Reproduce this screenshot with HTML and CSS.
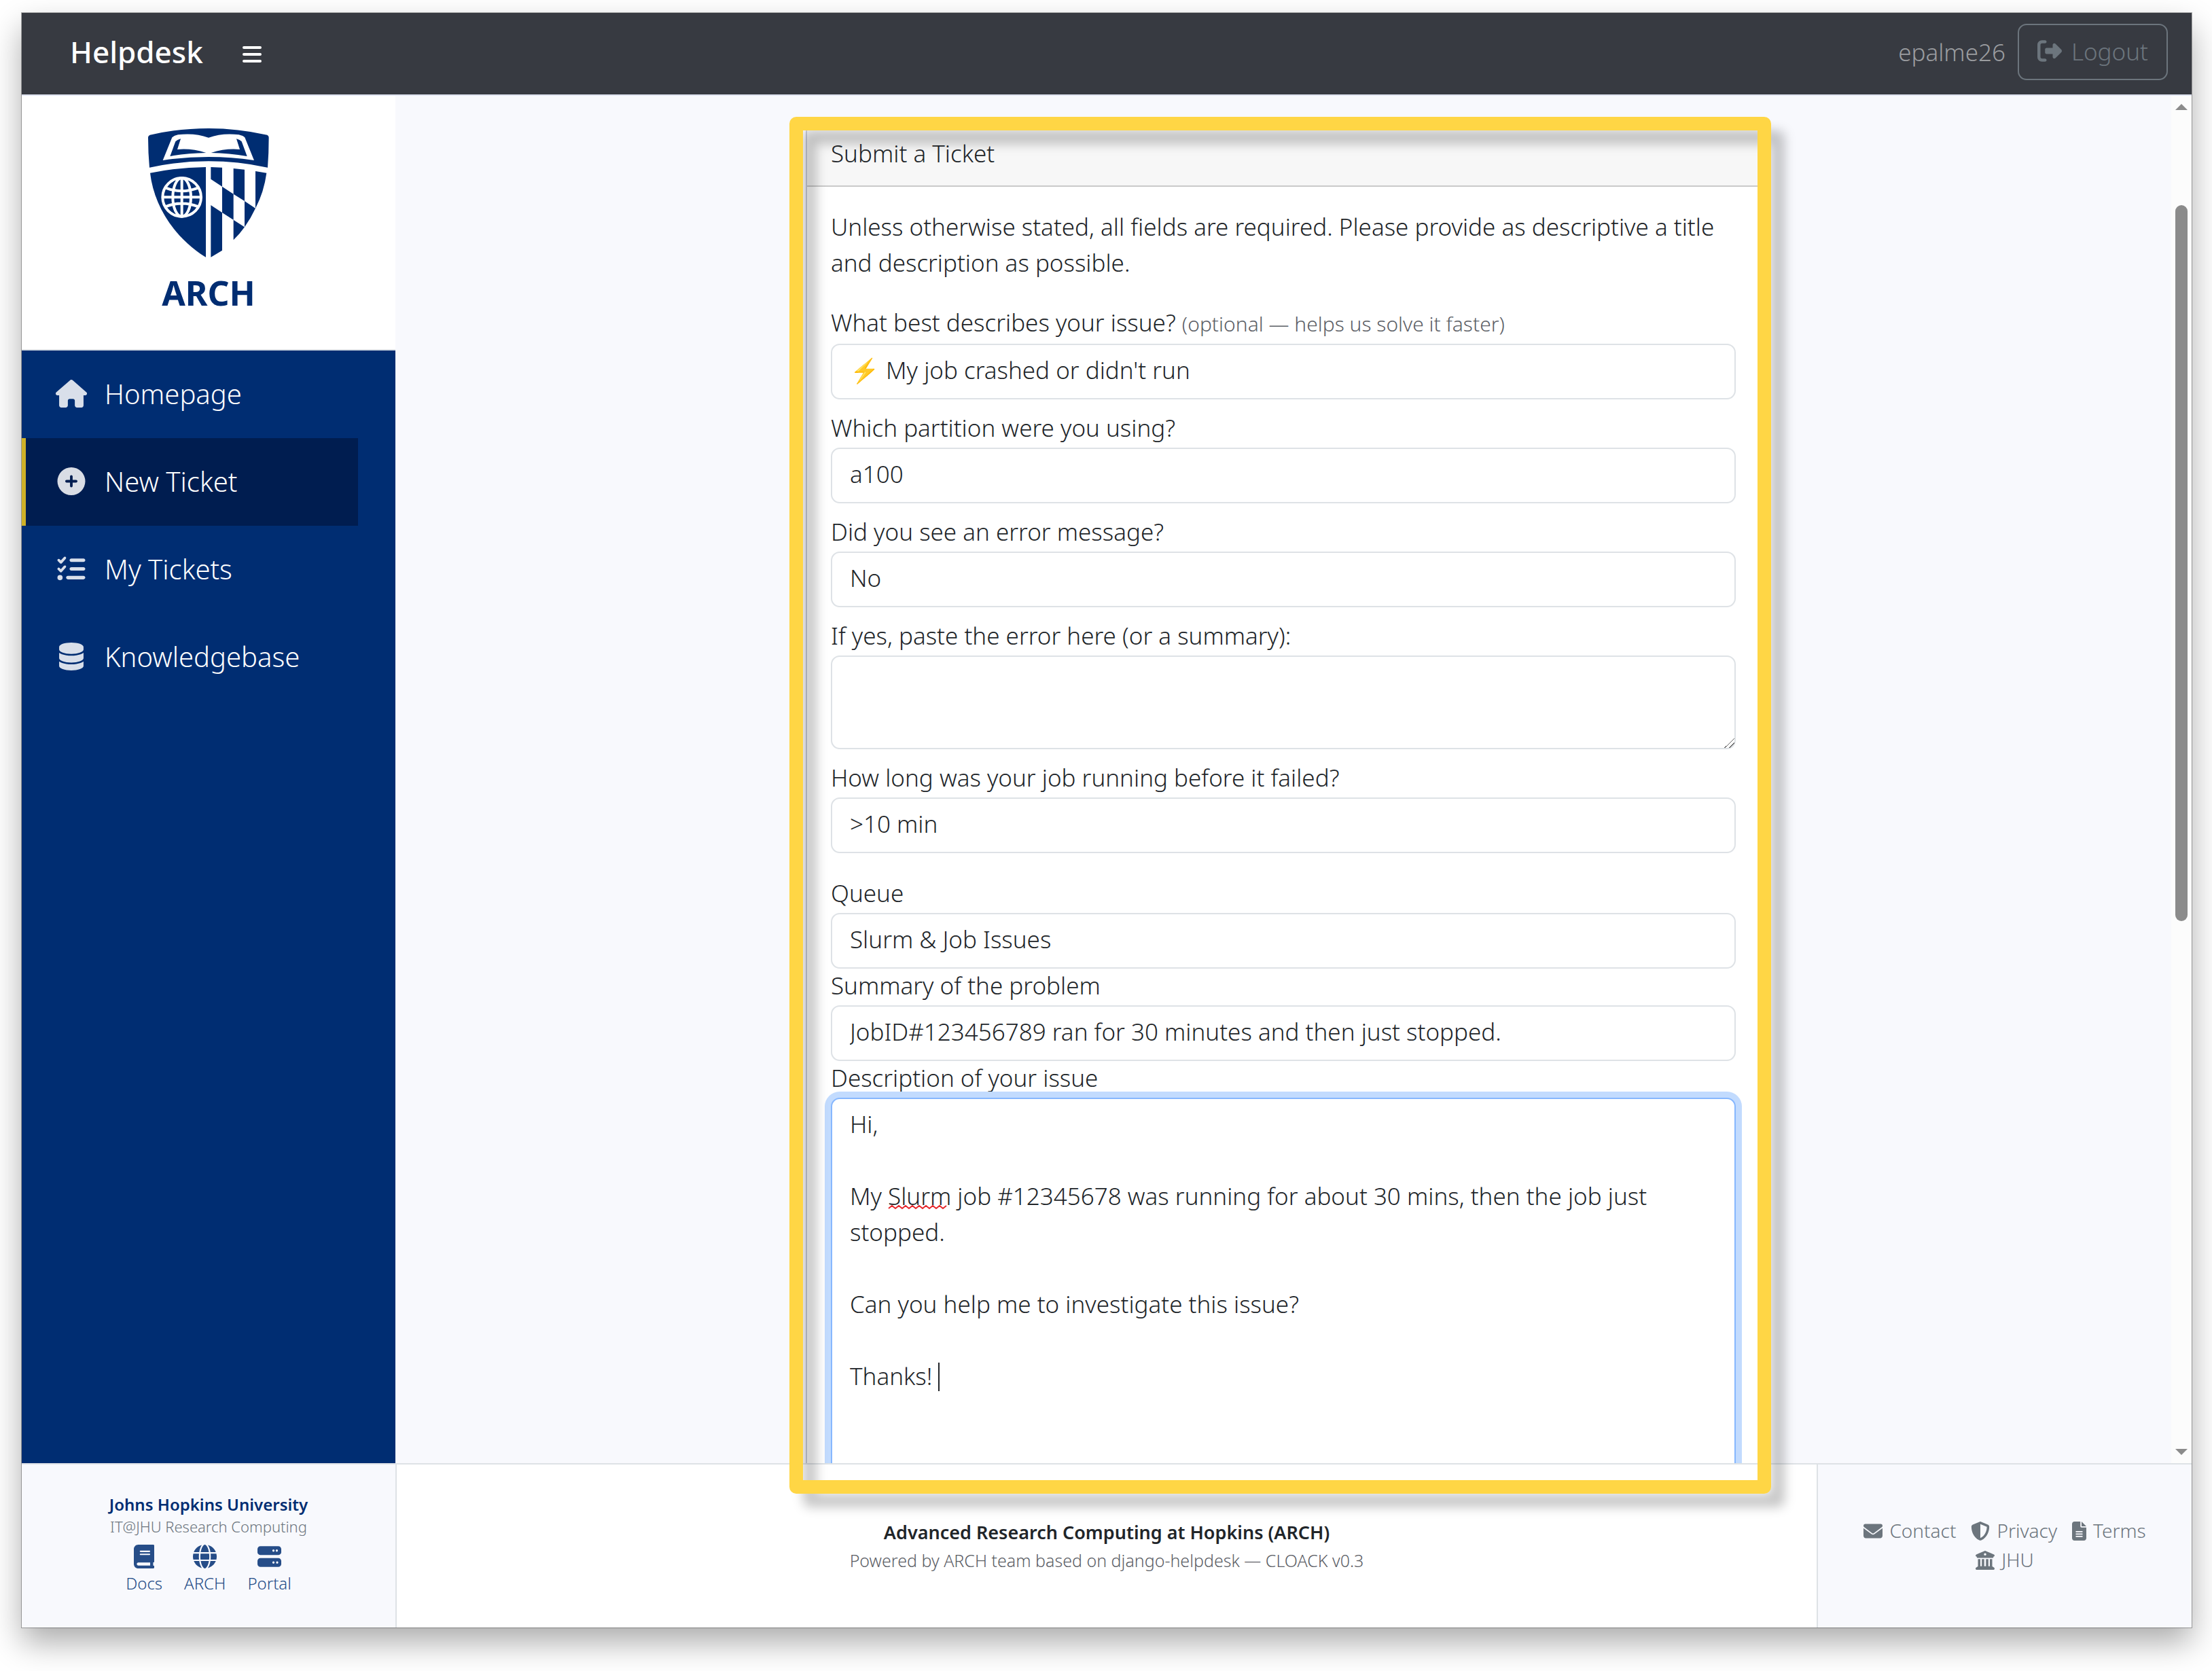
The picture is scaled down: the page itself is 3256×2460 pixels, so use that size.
FILE: index.html
```html
<!DOCTYPE html>
<html lang="en">
<head>
    <meta charset="UTF-8">
    <meta name="viewport" content="width=device-width, initial-scale=1.0">
    <title>Helpdesk - Submit a Ticket</title>
    <link rel="stylesheet" href="styles.css">
</head>
<body>

<div class="window">
    <header class="topbar">
        <a href="#" class="brand">Helpdesk</a>
        <button type="button" class="menu-toggle" aria-label="Toggle menu">
            <svg viewBox="0 0 28 24"><path d="M2 2h24M2 12h24M2 22h24" stroke="currentColor" stroke-width="4" stroke-linecap="round"/></svg>
        </button>
        <span class="user">epalme26</span>
        <button type="button" class="logout">
            <svg viewBox="0 0 512 512"><path d="M377.9 105.9L500.7 228.7c7.2 7.2 11.3 17.1 11.3 27.3s-4.1 20.1-11.3 27.3L377.9 406.1c-6.4 6.4-15 9.9-24 9.9c-18.7 0-33.9-15.2-33.9-33.9l0-62.1-128 0c-17.7 0-32-14.3-32-32l0-64c0-17.7 14.3-32 32-32l128 0 0-62.1c0-18.7 15.2-33.9 33.9-33.9c9 0 17.6 3.6 24 9.9zM160 96L96 96c-17.7 0-32 14.3-32 32l0 256c0 17.7 14.3 32 32 32l64 0c17.7 0 32 14.3 32 32s-14.3 32-32 32l-64 0c-53 0-96-43-96-96L0 128C0 75 43 32 96 32l64 0c17.7 0 32 14.3 32 32s-14.3 32-32 32z"/></svg>
            Logout
        </button>
    </header>

    <div class="middle">
        <aside class="sidebar">
            <a href="#" class="logo">
                <svg class="shield" viewBox="84 57 534 570">
                    <path d="M84 97Q84 89 92 86Q220 57 351 57Q480 57 610 86Q617 89 617 97Q617 165 612 230Q480 202 351 202Q220 202 90 230Q84 165 84 97z"/>
                    <!-- book -->
                    <path class="light" d="M149 198L190 97Q196 90 216 85Q290 76 351 98Q412 76 485 85Q505 90 511 97L552 198Q351 168 149 198z"/>
                    <path d="M228 103L213 150Q275 144 340 165Q260 166 181 180L205 115Q212 108 228 103z"/>
                    <path d="M474 103L489 150Q427 144 362 165Q442 166 521 180L497 115Q490 108 474 103z"/>
                    <!-- globe half -->
                    <path d="M93 254Q215 229 339 228V626C200 540 110 400 93 254z"/>
                    <g class="globe-lines">
                        <circle cx="233" cy="361" r="85"/>
                        <ellipse cx="233" cy="361" rx="40" ry="85"/>
                        <path d="M233 276V446M148 361H318M160 319Q233 348 306 319M160 403Q233 374 306 403"/>
                    </g>
                    <!-- banner half -->
                    <path d="M361 228L411 230V314L361 281zM361 396L411 429V596L361 626zM411 314L461 347V461L411 429zM461 234L510 239V378L461 347zM461 461L510 493Q490 522 461 550zM510 378L558 410Q538 453 510 493zM558 246L607 254Q596 337 558 410z"/>
                </svg>
                <span>ARCH</span>
            </a>
            <nav class="nav">
                <a href="#">
                    <svg viewBox="0 0 576 512"><path d="M575.8 255.5c0 18-15 32.1-32 32.1l-32 0 .7 160.2c0 2.7-.2 5.4-.5 8.1l0 16.2c0 22.1-17.9 40-40 40l-16 0c-1.1 0-2.2 0-3.3-.1c-1.4 .1-2.8 .1-4.2 .1L416 512l-24 0c-22.1 0-40-17.9-40-40l0-24 0-64c0-17.7-14.3-32-32-32l-64 0c-17.7 0-32 14.3-32 32l0 64 0 24c0 22.1-17.9 40-40 40l-24 0-31.9 0c-1.5 0-3-.1-4.5-.2c-1.2 .1-2.4 .2-3.6 .2l-16 0c-22.1 0-40-17.9-40-40l0-112c0-.9 0-1.9 .1-2.8l0-69.7-32 0c-18 0-32-14-32-32.1c0-9 3-17 10-24L266.4 8c7-7 15-8 22-8s15 2 21 7L564.8 231.5c8 7 12 15 11 24z"/></svg>
                    Homepage
                </a>
                <a href="#" class="active">
                    <svg viewBox="0 0 512 512"><path d="M256 512A256 256 0 1 0 256 0a256 256 0 1 0 0 512zM232 344l0-64-64 0c-13.3 0-24-10.7-24-24s10.7-24 24-24l64 0 0-64c0-13.3 10.7-24 24-24s24 10.7 24 24l0 64 64 0c13.3 0 24 10.7 24 24s-10.7 24-24 24l-64 0 0 64c0 13.3-10.7 24-24 24s-24-10.7-24-24z"/></svg>
                    New Ticket
                </a>
                <a href="#">
                    <svg viewBox="0 0 512 512"><path d="M152.1 38.2c9.9 8.9 10.7 24 1.8 33.9l-72 80c-4.4 4.9-10.6 7.8-17.2 7.9s-12.9-2.4-17.6-7L7 113C-2.3 103.6-2.3 88.4 7 79s24.6-9.4 33.9 0l22.1 22.1 55.1-61.2c8.9-9.9 24-10.7 33.9-1.8zm0 160c9.9 8.9 10.7 24 1.8 33.9l-72 80c-4.4 4.9-10.6 7.8-17.2 7.9s-12.9-2.4-17.6-7L7 273c-9.4-9.4-9.4-24.6 0-33.9s24.6-9.4 33.9 0l22.1 22.1 55.1-61.2c8.9-9.9 24-10.7 33.9-1.8zM224 96c0-17.7 14.3-32 32-32l224 0c17.7 0 32 14.3 32 32s-14.3 32-32 32l-224 0c-17.7 0-32-14.3-32-32zm0 160c0-17.7 14.3-32 32-32l224 0c17.7 0 32 14.3 32 32s-14.3 32-32 32l-224 0c-17.7 0-32-14.3-32-32zM160 416c0-17.7 14.3-32 32-32l288 0c17.7 0 32 14.3 32 32s-14.3 32-32 32l-288 0c-17.7 0-32-14.3-32-32zM48 368a48 48 0 1 1 0 96 48 48 0 1 1 0-96z"/></svg>
                    My Tickets
                </a>
                <a href="#">
                    <svg viewBox="0 0 448 512"><path d="M448 80l0 48c0 44.2-100.3 80-224 80S0 172.2 0 128L0 80C0 35.8 100.3 0 224 0S448 35.8 448 80zM393.2 214.7c20.8-7.4 39.9-16.9 54.8-28.6L448 288c0 44.2-100.3 80-224 80S0 332.2 0 288L0 186.1c14.9 11.8 34 21.2 54.8 28.6C99.7 230.7 159.5 240 224 240s124.3-9.3 169.2-25.3zM0 346.1c14.9 11.8 34 21.2 54.8 28.6C99.7 390.7 159.5 400 224 400s124.3-9.3 169.2-25.3c20.8-7.4 39.9-16.9 54.8-28.6l0 85.9c0 44.2-100.3 80-224 80S0 476.2 0 432l0-85.9z"/></svg>
                    Knowledgebase
                </a>
            </nav>
        </aside>

        <div class="content">
            <main class="scroll-area">
                <form class="card">
                    <div class="card-header">Submit a Ticket</div>
                    <div class="card-body">
                        <p class="intro">Unless otherwise stated, all fields are required. Please provide as descriptive a title and description as possible.</p>

                        <div class="triage">
                            <div class="field">
                                <label for="issueType">What best describes your issue? <small>(optional — helps us solve it faster)</small></label>
                                <select id="issueType"><option>⚡ My job crashed or didn't run</option></select>
                            </div>
                            <div class="field">
                                <label for="partition">Which partition were you using?</label>
                                <input type="text" id="partition" value="a100">
                            </div>
                            <div class="field">
                                <label for="sawError">Did you see an error message?</label>
                                <select id="sawError"><option>No</option></select>
                            </div>
                            <div class="field">
                                <label for="errorText">If yes, paste the error here (or a summary):</label>
                                <textarea id="errorText" rows="2"></textarea>
                            </div>
                            <div class="field">
                                <label for="runtime">How long was your job running before it failed?</label>
                                <select id="runtime"><option>&gt;10 min</option></select>
                            </div>
                        </div>

                        <label for="queue">Queue</label>
                        <select id="queue"><option>Slurm &amp; Job Issues</option></select>

                        <label for="summary">Summary of the problem</label>
                        <input type="text" id="summary" value="JobID#123456789 ran for 30 minutes and then just stopped.">

                        <label for="description">Description of your issue</label>
                        <div class="editor">
                            <textarea id="description" rows="12" spellcheck="false">Hi,

My Slurm job #12345678 was running for about 30 mins, then the job just stopped.

Can you help me to investigate this issue?

Thanks!</textarea>
                            <svg class="misspelled" viewBox="0 0 90 8" aria-hidden="true"><path d="M1 6l5-4 5 4 5-4 5 4 5-4 5 4 5-4 5 4 5-4 5 4 5-4 5 4 5-4 5 4 5-4 5 4 5-4"/></svg>
                            <span class="caret"></span>
                        </div>
                    </div>
                </form>
            </main>
            <div class="highlight"></div>
        </div>

        <div class="scrollbar">
            <span class="arrow-up"></span>
            <span class="thumb"></span>
            <span class="arrow-down"></span>
        </div>
    </div>

    <footer class="footer">
        <div class="footer-left">
            <strong>Johns Hopkins University</strong>
            <span class="unit">IT@JHU Research Computing</span>
            <div class="quick-links">
                <a href="#">
                    <svg viewBox="0 0 448 512"><path d="M96 0C43 0 0 43 0 96L0 416c0 53 43 96 96 96l288 0 32 0c17.7 0 32-14.3 32-32s-14.3-32-32-32l0-64c17.7 0 32-14.3 32-32l0-320c0-17.7-14.3-32-32-32L384 0 96 0zm0 384l256 0 0 64L96 448c-17.7 0-32-14.3-32-32s14.3-32 32-32zm32-240c0-8.8 7.2-16 16-16l192 0c8.8 0 16 7.2 16 16s-7.2 16-16 16l-192 0c-8.8 0-16-7.2-16-16zm16 48l192 0c8.8 0 16 7.2 16 16s-7.2 16-16 16l-192 0c-8.8 0-16-7.2-16-16s7.2-16 16-16z"/></svg>
                    Docs
                </a>
                <a href="#">
                    <svg viewBox="0 0 512 512"><path d="M352 256c0 22.2-1.2 43.6-3.3 64l-185.3 0c-2.2-20.4-3.3-41.8-3.3-64s1.2-43.6 3.3-64l185.3 0c2.2 20.4 3.3 41.8 3.3 64zm28.8-64l123.1 0c5.3 20.5 8.1 41.9 8.1 64s-2.8 43.5-8.1 64l-123.1 0c2.1-20.6 3.2-42 3.2-64s-1.1-43.4-3.2-64zm112.6-32l-116.7 0c-10-63.9-29.8-117.4-55.3-151.6c78.3 20.7 142 77.5 171.9 151.6zm-149.1 0l-176.6 0c6.1-36.4 15.5-68.6 27-94.7c10.5-23.6 22.2-40.7 33.5-51.5C239.4 3.2 248.7 0 256 0s16.6 3.2 27.8 13.8c11.3 10.8 23 27.9 33.5 51.5c11.6 26 20.9 58.2 27 94.7zm-209 0L18.6 160C48.6 85.9 112.2 29.1 190.6 8.4C165.1 42.6 145.3 96.1 135.3 160zM8.1 192l123.1 0c-2.1 20.6-3.2 42-3.2 64s1.1 43.4 3.2 64L8.1 320C2.8 299.5 0 278.1 0 256s2.8-43.5 8.1-64zM194.7 446.6c-11.6-26-20.9-58.2-27-94.6l176.6 0c-6.1 36.4-15.5 68.6-27 94.6c-10.5 23.6-22.2 40.7-33.5 51.5C272.6 508.8 263.3 512 256 512s-16.6-3.2-27.8-13.8c-11.3-10.8-23-27.9-33.5-51.5zM135.3 352c10 63.9 29.8 117.4 55.3 151.6C112.2 482.9 48.6 426.1 18.6 352l116.7 0zm358.1 0c-30 74.1-93.6 130.9-171.9 151.6c25.5-34.2 45.2-87.7 55.3-151.6l116.7 0z"/></svg>
                    ARCH
                </a>
                <a href="#">
                    <svg viewBox="0 0 512 512"><path d="M64 32C28.7 32 0 60.7 0 96l0 64c0 35.3 28.7 64 64 64l384 0c35.3 0 64-28.7 64-64l0-64c0-35.3-28.7-64-64-64L64 32zm280 72a24 24 0 1 1 0 48 24 24 0 1 1 0-48zm48 24a24 24 0 1 1 48 0 24 24 0 1 1 -48 0zM64 288c-35.3 0-64 28.7-64 64l0 64c0 35.3 28.7 64 64 64l384 0c35.3 0 64-28.7 64-64l0-64c0-35.3-28.7-64-64-64L64 288zm280 72a24 24 0 1 1 0 48 24 24 0 1 1 0-48zm56 24a24 24 0 1 1 48 0 24 24 0 1 1 -48 0z"/></svg>
                    Portal
                </a>
            </div>
        </div>
        <div class="footer-center">
            <strong>Advanced Research Computing at Hopkins (ARCH)</strong>
            <span class="powered">Powered by ARCH team based on django-helpdesk — CLOACK v0.3</span>
        </div>
        <div class="footer-right">
            <a href="#">
                <svg viewBox="0 0 512 512"><path d="M48 64C21.5 64 0 85.5 0 112c0 15.1 7.1 29.3 19.2 38.4L236.8 313.6c11.4 8.5 27 8.5 38.4 0L492.8 150.4c12.1-9.1 19.2-23.3 19.2-38.4c0-26.5-21.5-48-48-48L48 64zM0 176L0 384c0 35.3 28.7 64 64 64l384 0c35.3 0 64-28.7 64-64l0-208L294.4 339.2c-22.8 17.1-54 17.1-76.8 0L0 176z"/></svg>
                Contact
            </a>
            <a href="#">
                <svg viewBox="0 0 512 512"><path d="M256 0c4.6 0 9.2 1 13.4 2.9L457.7 82.8c22 9.3 38.4 31 38.3 57.2c-.5 99.2-41.3 280.7-213.6 363.2c-16.7 8-36.1 8-52.8 0C57.3 420.7 16.5 239.2 16 140c-.1-26.2 16.3-47.9 38.3-57.2L242.7 2.9C246.8 1 251.4 0 256 0zm0 66.8l0 378.1C394 378 431.1 230.1 432 141.4L256 66.8z"/></svg>
                Privacy
            </a>
            <a href="#">
                <svg viewBox="0 0 384 512"><path d="M64 0C28.7 0 0 28.7 0 64L0 448c0 35.3 28.7 64 64 64l256 0c35.3 0 64-28.7 64-64l0-288-128 0c-17.7 0-32-14.3-32-32L224 0 64 0zM256 0l0 128 128 0L256 0zM112 256l160 0c8.8 0 16 7.2 16 16s-7.2 16-16 16l-160 0c-8.8 0-16-7.2-16-16s7.2-16 16-16zm0 64l160 0c8.8 0 16 7.2 16 16s-7.2 16-16 16l-160 0c-8.8 0-16-7.2-16-16s7.2-16 16-16zm0 64l160 0c8.8 0 16 7.2 16 16s-7.2 16-16 16l-160 0c-8.8 0-16-7.2-16-16s7.2-16 16-16z"/></svg>
                Terms
            </a>
            <a href="#">
                <svg viewBox="0 0 512 512"><path d="M243.4 2.6l-224 96c-14 6-21.8 21-18.7 35.8S16.8 160 32 160l0 8c0 13.3 10.7 24 24 24l400 0c13.3 0 24-10.7 24-24l0-8c15.2 0 28.3-10.7 31.3-25.6s-4.8-29.9-18.7-35.8l-224-96c-8-3.4-17.2-3.4-25.2 0zM128 224l-64 0 0 196.3c-.6 .3-1.2 .7-1.8 1.1l-48 32c-11.7 7.8-17 22.4-12.9 35.9S17.9 512 32 512l448 0c14.1 0 26.5-9.2 30.6-22.7s-1.1-28.1-12.9-35.9l-48-32c-.6-.4-1.2-.7-1.8-1.1L448 224l-64 0 0 192-40 0 0-192-64 0 0 192-48 0 0-192-64 0 0 192-40 0 0-192zM256 64a32 32 0 1 1 0 64 32 32 0 1 1 0-64z"/></svg>
                JHU
            </a>
        </div>
    </footer>
</div>

</body>
</html>
```
FILE: styles.css
```css
* {
    box-sizing: border-box;
}

body {
    margin: 0;
    height: 100vh;
    padding: 19px 30px 64px 32px;
    overflow: hidden;
    background-color: #ffffff;
    color: #212529;
    font-family: "Noto Sans", sans-serif;
    font-size: 35px;
    font-weight: 300;
    line-height: 53px;
}

a {
    text-decoration: none;
}

svg {
    fill: currentColor;
    flex-shrink: 0;
}

button, input, select, textarea {
    font: inherit;
    color: inherit;
}

.window {
    display: flex;
    flex-direction: column;
    height: 100%;
    background-color: #f8f9fd;
    box-shadow: 0 0 0 1px rgba(0, 0, 0, 0.3), 0 22px 44px rgba(0, 0, 0, 0.33);
}

/* top bar */
.topbar {
    display: flex;
    align-items: center;
    height: 122px;
    padding: 0 35px 5px 71px;
    background-color: #373a41;
    border-bottom: 2px solid #dfe3f0;
}

.brand {
    color: #ffffff;
    font-size: 44px;
    font-weight: 500;
}

.menu-toggle {
    display: flex;
    margin-left: 58px;
    margin-right: auto;
    padding: 6px 0 0;
    background: none;
    border: none;
    color: #ffffff;
    cursor: pointer;
}

.menu-toggle svg {
    width: 28px;
    height: 24px;
}

.user {
    margin-right: 18px;
    color: #9b9da0;
}

.logout {
    display: flex;
    align-items: center;
    gap: 14px;
    height: 83px;
    padding: 0 27px 3px;
    background: none;
    border: 2px solid #6c757d;
    border-radius: 13px;
    color: #6c757d;
    cursor: pointer;
}

.logout svg {
    width: 36px;
    height: 36px;
}

/* middle row */
.middle {
    display: flex;
    flex: 1;
    min-height: 0;
}

.sidebar {
    width: 550px;
    flex-shrink: 0;
    background-color: #002d72;
}

.logo {
    display: flex;
    flex-direction: column;
    align-items: center;
    height: 375px;
    padding-top: 48px;
    background-color: #ffffff;
    border-bottom: 2px solid #dee2e6;
    color: #002d72;
    font-size: 50px;
    font-weight: 700;
    line-height: 104px;
}

.shield {
    width: 178px;
    height: 190px;
}

.shield .light {
    fill: #ffffff;
}

.globe-lines {
    fill: none;
    stroke: #ffffff;
    stroke-width: 12;
}

.nav a {
    display: flex;
    align-items: center;
    width: 90%;
    height: 129px;
    padding: 0 0 3px 43px;
    border-left: 6px solid transparent;
    color: #ffffff;
    font-size: 40px;
}

.nav a.active {
    background-color: #001d50;
    border-left-color: #cfb127;
}

.nav svg {
    width: 48px;
    height: 41px;
    margin-right: 25px;
    opacity: 0.85;
}

/* ticket form */
.content {
    position: relative;
    flex: 1;
    min-width: 0;
}

.scroll-area {
    height: 100%;
    padding-top: 41px;
    overflow: hidden;
}

.card {
    max-width: 1406px;
    margin: 0 auto;
    background-color: #ffffff;
    border: 2px solid #c9ccd8;
    border-radius: 13px;
}

.card-header {
    padding: 15px 35px 21px;
    background-color: #f7f7f7;
    border-bottom: 2px solid #cacaca;
}

.card-body {
    padding: 32px 35px;
}

.intro {
    margin: 0 0 37px;
}

.field {
    margin-bottom: 17px;
}

.triage {
    margin-bottom: 34px;
}

.triage .field:last-child {
    margin-bottom: 0;
}

label {
    display: block;
    margin-bottom: 4px;
    line-height: 50px;
}

label small {
    color: #5c6066;
    font-size: 30px;
}

input, select, textarea {
    display: block;
    width: 100%;
    padding: 10px 26px 15px;
    background-color: #ffffff;
    border: 2px solid #dee2e6;
    border-radius: 13px;
    appearance: none;
    outline: none;
}

input, select {
    height: 82px;
}

textarea {
    padding-bottom: 18px;
}

textarea::-webkit-scrollbar {
    width: 18px;
    height: 18px;
}

textarea::-webkit-resizer {
    background: linear-gradient(135deg, transparent 50%, #6b6b6b 50% 56%, transparent 56% 72%, #6b6b6b 72% 78%, transparent 78%);
}

.editor {
    position: relative;
}

.editor textarea {
    border-color: #86b7fe;
    box-shadow: 0 0 0 9px #c2dbfe;
    resize: none;
}

/* spelling mark and caret lie over the text */
.misspelled {
    position: absolute;
    top: 157px;
    left: 84px;
    width: 90px;
    height: 8px;
    fill: none;
    stroke: #e5262b;
    stroke-width: 2;
}

.caret {
    position: absolute;
    top: 390px;
    left: 158px;
    width: 2px;
    height: 42px;
    background-color: #212529;
}

.highlight {
    position: absolute;
    top: 31px;
    bottom: -45px;
    left: calc(50% - 727px);
    width: 1445px;
    border: 20px solid #ffd645;
    border-radius: 10px;
    filter: drop-shadow(20px 20px 8px rgba(0, 0, 0, 0.22));
    pointer-events: none;
}

/* scrollbar */
.scrollbar {
    display: flex;
    flex-direction: column;
    width: 30px;
    padding: 12px 6px;
    background-color: #fcfcfc;
}

.arrow-up, .arrow-down {
    height: 9px;
    background-color: #8b8b8b;
    clip-path: polygon(50% 0, 100% 100%, 0 100%);
}

.arrow-down {
    margin-top: auto;
    clip-path: polygon(0 0, 100% 0, 50% 100%);
}

.thumb {
    height: 53%;
    margin-top: 140px;
    background-color: #8b8b8b;
    border-radius: 9px;
}

/* footer */
.footer {
    display: flex;
    height: 242px;
    border-top: 2px solid #dee2e6;
}

.footer-left, .footer-center {
    display: flex;
    flex-direction: column;
    align-items: center;
    justify-content: center;
}

.footer-left {
    width: 552px;
    padding-bottom: 6px;
    border-right: 2px solid #dee2e6;
}

.footer-left strong {
    color: #002d72;
    font-size: 24px;
    font-weight: 600;
    line-height: 34px;
}

.unit {
    color: #6c757d;
    font-size: 22px;
    line-height: 30px;
}

.quick-links {
    display: flex;
    gap: 32px;
    margin-top: 12px;
}

.quick-links a {
    display: flex;
    flex-direction: column;
    align-items: center;
    gap: 4px;
    color: #264d88;
    font-size: 24px;
    line-height: 36px;
}

.quick-links svg {
    height: 35px;
}

.footer-center {
    flex: 1;
    background-color: #ffffff;
}

.footer-center strong {
    font-size: 27px;
    font-weight: 600;
    line-height: 42px;
}

.powered {
    color: #5c6066;
    font-size: 25px;
    line-height: 40px;
}

.footer-right {
    display: flex;
    flex-wrap: wrap;
    align-content: center;
    justify-content: center;
    column-gap: 22px;
    width: 552px;
    padding: 0 35px 2px;
    border-left: 2px solid #dee2e6;
}

.footer-right a {
    display: flex;
    align-items: center;
    gap: 10px;
    color: #6c757d;
    font-size: 28px;
    line-height: 43px;
}

.footer-right svg {
    height: 28px;
}
```
